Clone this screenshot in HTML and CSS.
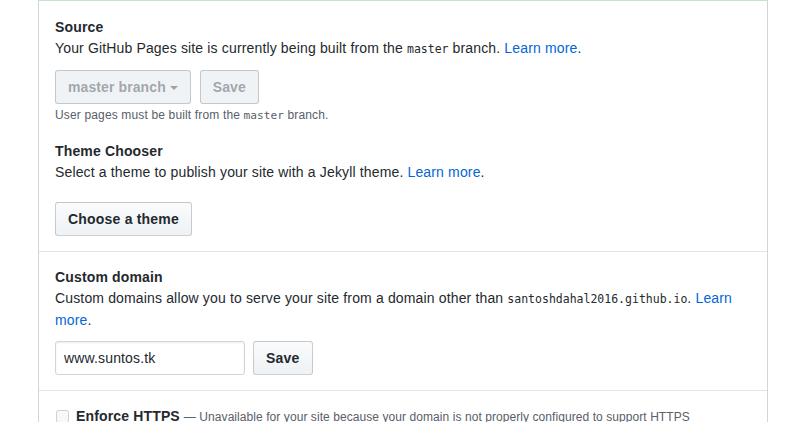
FILE: index.html
```html
<!DOCTYPE html>
<html lang="en">
<head>
<meta charset="utf-8">
<title>GitHub Pages</title>
<link rel="stylesheet" href="styles.css">
</head>
<body>
<div class="box">
  <div class="row first">
    <h4 class="heading">Source</h4>
    <p class="desc">Your GitHub Pages site is currently being built from the <code>master</code> branch. <a href="#">Learn more</a>.</p>
    <div class="actions source-actions">
      <button class="btn disabled select" disabled>master branch <span class="caret"></span></button>
      <button class="btn disabled" disabled>Save</button>
    </div>
    <p class="note">User pages must be built from the <code>master</code> branch.</p>

    <h4 class="heading theme-heading">Theme Chooser</h4>
    <p class="desc">Select a theme to publish your site with a Jekyll theme. <a href="#">Learn more</a>.</p>
    <div class="actions theme-actions">
      <button class="btn">Choose a theme</button>
    </div>
  </div>

  <div class="row">
    <h4 class="heading">Custom domain</h4>
    <p class="desc">Custom domains allow you to serve your site from a domain other than <code>santoshdahal2016.github.io</code>. <a href="#">Learn more</a>.</p>
    <div class="actions domain-actions">
      <input class="input" type="text" value="www.suntos.tk">
      <button class="btn">Save</button>
    </div>
  </div>

  <div class="row">
    <label class="check">
      <input type="checkbox" disabled>
      <span class="check-label">Enforce HTTPS</span>
      <span class="check-note">— Unavailable for your site because your domain is not properly configured to support HTTPS</span>
    </label>
  </div>
</div>
</body>
</html>
```

FILE: styles.css
```css
* { box-sizing: border-box; }

html, body {
  margin: 0;
  padding: 0;
  background: #fff;
}

body {
  font-family: "Liberation Sans", Arial, sans-serif;
  font-size: 14px;
  line-height: 1.5;
  letter-spacing: 0.15px;
  color: #24292e;
}

.box {
  margin-left: 38px;
  width: 730px;
  border: 1px solid #d1d5da;
  border-top: 1px solid #c3e6cb;
  border-bottom: 0;
  height: 430px;
  overflow: hidden;
}

.row {
  padding: 15px 16px 15px;
  border-bottom: 1px solid #e1e4e8;
}

.row.first {
  padding-top: 16px;
}

.heading {
  margin: 0;
  font-size: 14px;
  font-weight: bold;
  line-height: 21px;
}

.desc {
  margin: 0;
  line-height: 21px;
}

.desc a, .desc a:visited {
  color: #0366d6;
  text-decoration: none;
}

code {
  font-family: "DejaVu Sans Mono", "Liberation Mono", monospace;
  font-size: 11.5px;
  letter-spacing: 0;
}

.actions {
  display: flex;
  gap: 8px;
  margin-top: 10px;
}

.source-actions {
  gap: 9px;
}

.theme-actions {
  margin-top: 19px;
}

.domain-actions {
  margin-top: 10px;
}

.btn {
  font-family: "Liberation Sans", Arial, sans-serif;
  font-size: 14px;
  font-weight: bold;
  letter-spacing: 0.2px;
  line-height: 20px;
  height: 34px;
  padding: 6px 12px;
  color: #24292e;
  background-color: #eff3f6;
  background-image: linear-gradient(-180deg, #fafbfc 0%, #eff3f6 90%);
  border: 1px solid rgba(27, 31, 35, 0.2);
  border-radius: 3px;
  display: inline-flex;
  align-items: center;
  white-space: nowrap;
  cursor: pointer;
}

.btn.disabled {
  color: rgba(36, 41, 46, 0.4);
  background-image: none;
  background-color: #eff3f6;
  border-color: rgba(27, 31, 35, 0.2);
  letter-spacing: 0.1px;
}

.caret {
  display: inline-block;
  width: 0;
  height: 0;
  margin-left: 4px;
  margin-top: 2px;
  border-top: 4px solid rgba(36, 41, 46, 0.4);
  border-left: 4px solid transparent;
  border-right: 4px solid transparent;
}

.note {
  margin: 2px 0 0;
  font-size: 12px;
  line-height: 18px;
  color: #586069;
}

.note code {
  font-size: 11.2px;
}

.theme-heading {
  margin-top: 16px;
}

.input {
  width: 190px;
  height: 34px;
  padding: 6px 8px;
  font-family: "Liberation Sans", Arial, sans-serif;
  font-size: 14px;
  letter-spacing: 0.15px;
  line-height: 20px;
  color: #24292e;
  background: #fff;
  border: 1px solid #d1d5da;
  border-radius: 3px;
  box-shadow: inset 0 1px 2px rgba(27, 31, 35, 0.075);
  outline: none;
}

.check {
  display: flex;
  align-items: baseline;
  padding-top: 0;
}

.check input {
  margin: 0 7px 0 1px;
  width: 13px;
  height: 13px;
  position: relative;
  top: 2px;
}

.check-label {
  font-weight: bold;
  font-size: 14px;
}

.check-note {
  margin-left: 4px;
  font-size: 12px;
  letter-spacing: 0.07px;
  color: #586069;
  white-space: nowrap;
}
```
